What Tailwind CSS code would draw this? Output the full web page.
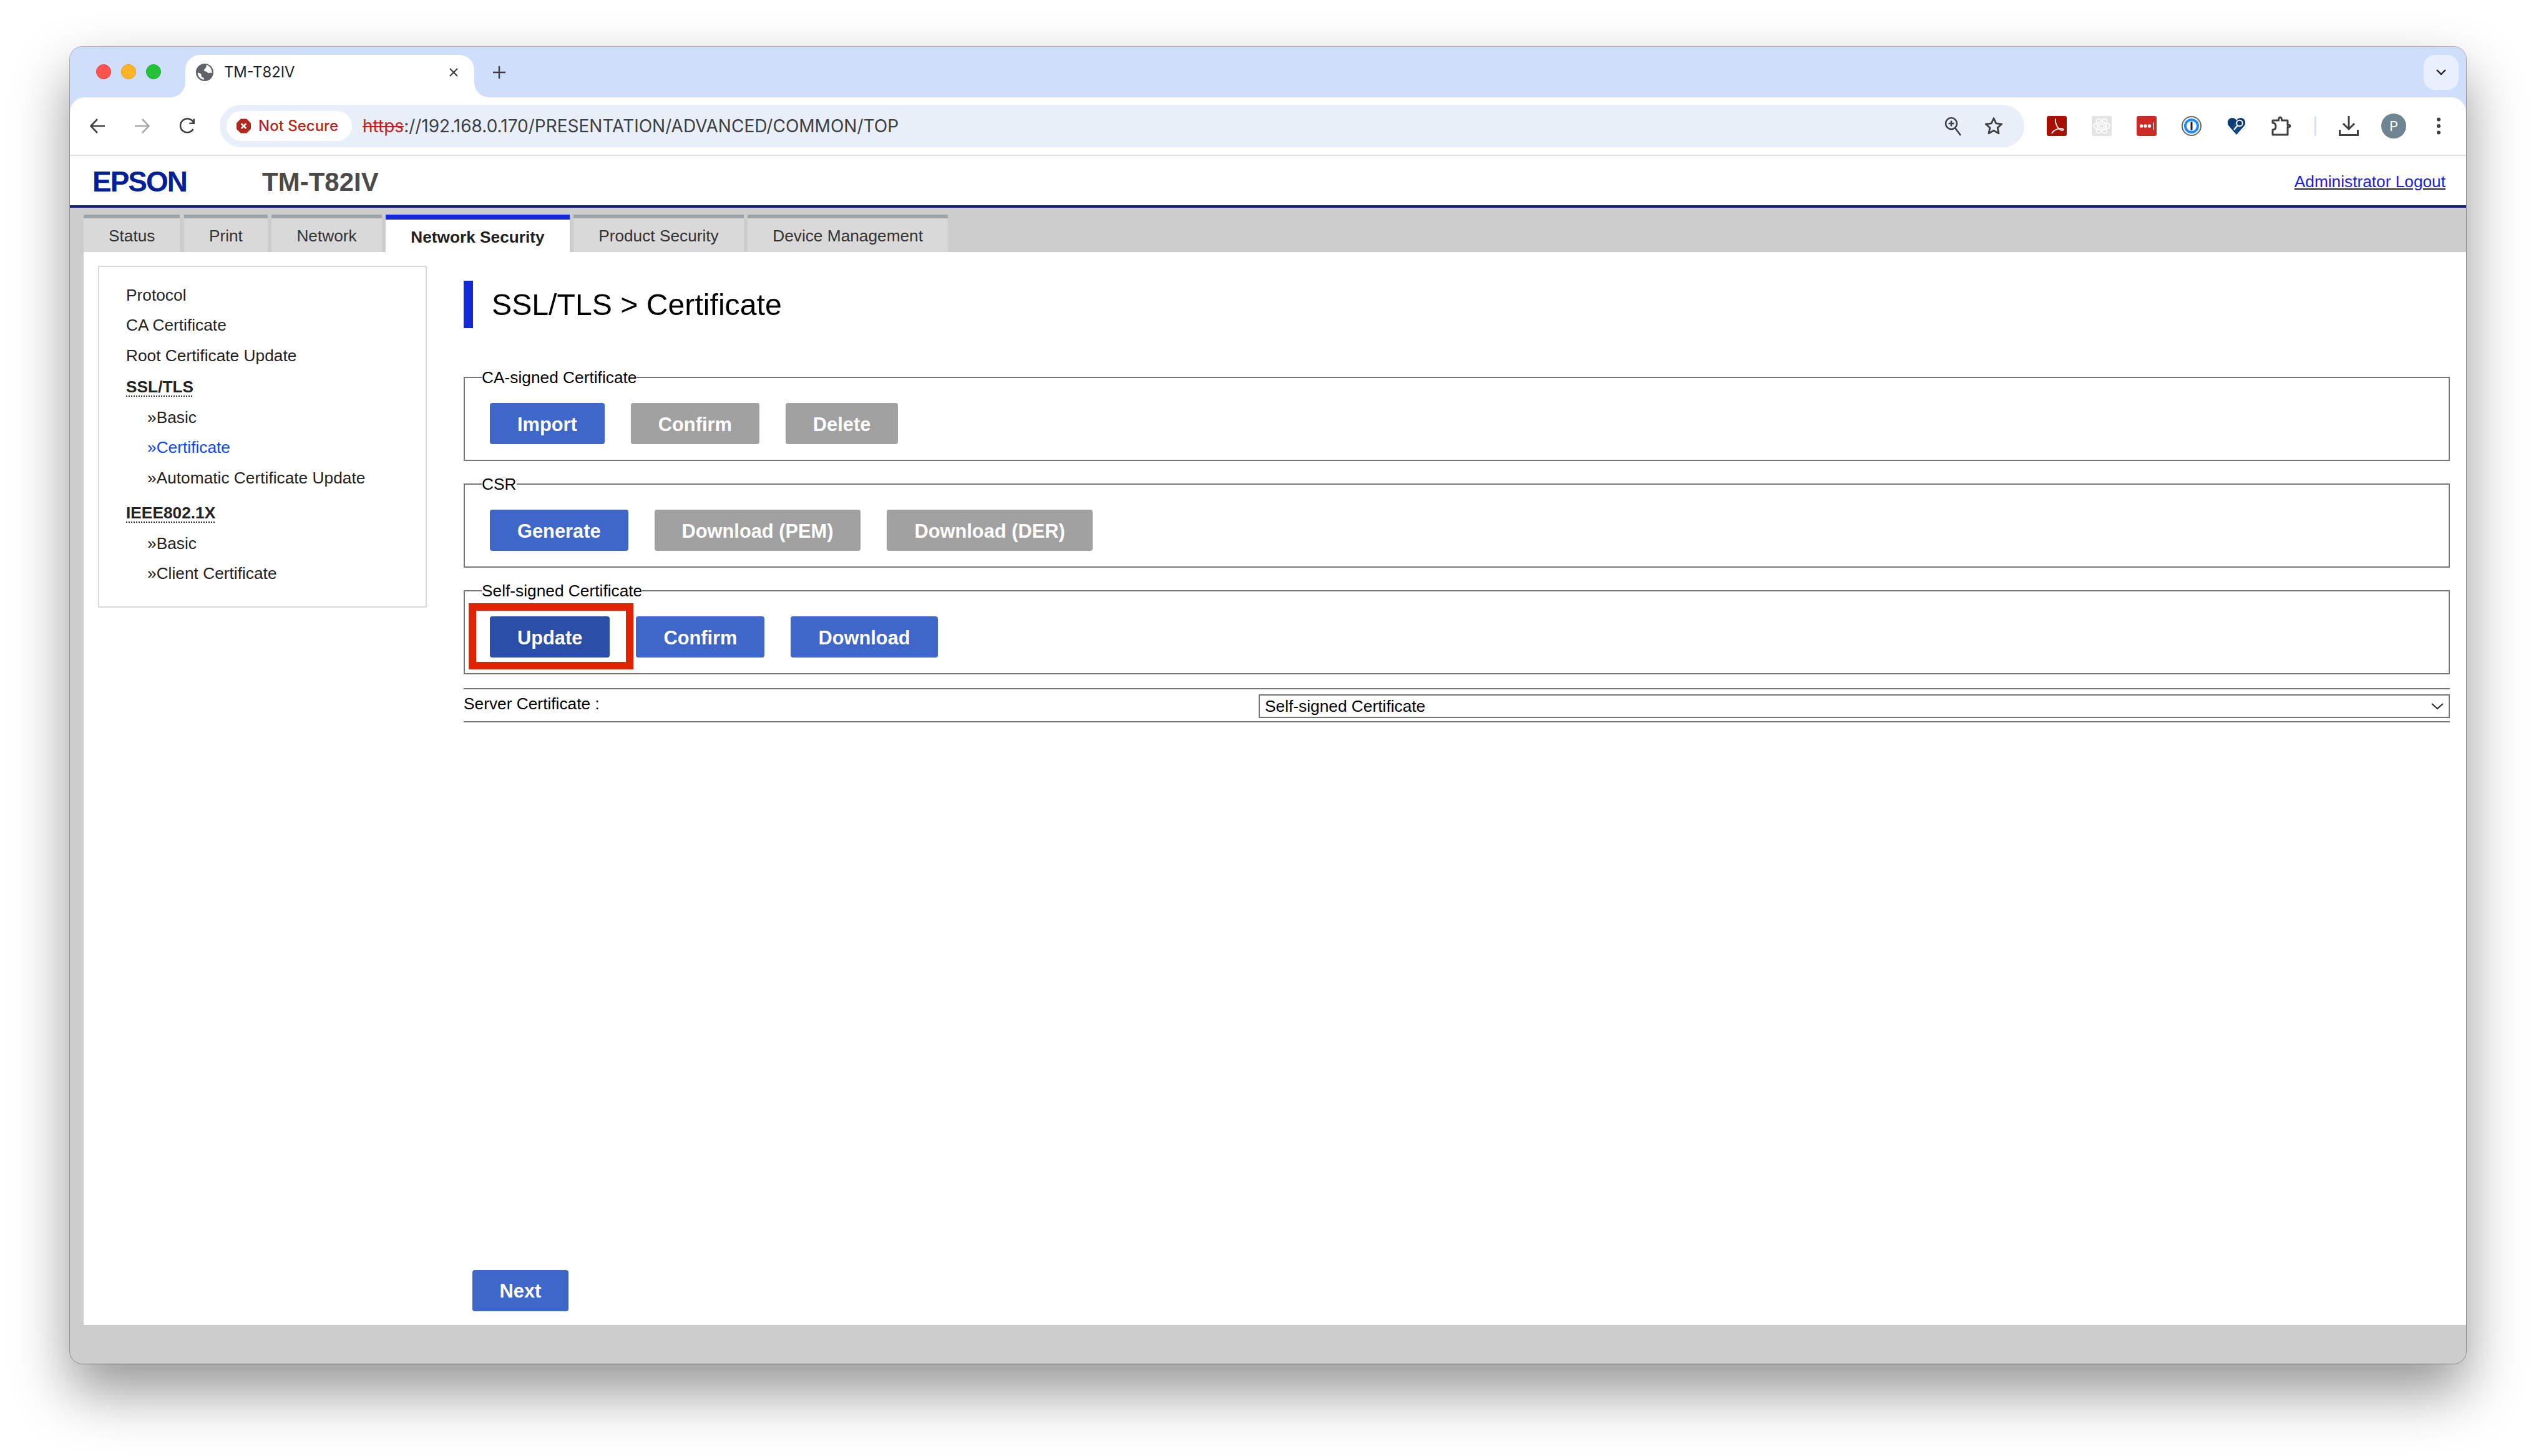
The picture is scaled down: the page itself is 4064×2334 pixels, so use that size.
<!DOCTYPE html>
<html lang="en">

<head>
    <meta charset="UTF-8">
    <meta name="viewport" content="width=device-width, initial-scale=1.0">
    <script src="https://cdn.jsdelivr.net/npm/@tailwindcss/browser@4"></script>
    <title>TM-T82IV</title>
</head>

<body class="bg-white w-[4064px] h-[2334px] overflow-hidden pt-[75px] pl-[112px] font-['Liberation_Sans',Arial,sans-serif] text-black">
    <div class="flex flex-col w-[3840px] h-[2111px] rounded-[20px] overflow-hidden bg-[#cdcdcd] shadow-[0_0_0_1px_rgba(0,0,0,0.28),0_44px_90px_rgba(0,0,0,0.42)]">

        <!-- Browser chrome -->
        <div class="bg-[#cfdffb]">
            <div class="flex items-end h-[81px]">
                <div class="flex items-center gap-4 pl-[42px] w-[185px] h-[81px] pb-[2px]">
                    <span class="w-6 h-6 rounded-full bg-[#ff5350] border border-[#e0443e]"></span>
                    <span class="w-6 h-6 rounded-full bg-[#ffb428] border border-[#e09b1e]"></span>
                    <span class="w-6 h-6 rounded-full bg-[#24c139] border border-[#1aab29]"></span>
                </div>
                <!-- Tab -->
                <div class="relative flex items-center w-[463px] h-[68px] bg-white rounded-t-[24px] pl-[17px] pb-[12px]">
                    <div class="absolute bottom-0 -left-6 w-6 h-6 bg-white">
                        <div class="w-6 h-6 bg-[#cfdffb] rounded-br-[24px]"></div>
                    </div>
                    <svg class="w-7 h-7" viewBox="0 0 24 24">
                        <circle cx="12" cy="12" r="12" fill="#5f6368" />
                        <path fill="#fff" d="M14 1.600c3 .8 5.600 3 7 5.900.9 2 1.200 4 .9 5.800-1.300-.9-2.600-1-3.900-.5-1 .4-1.700.2-2.300-.8-.6-1.100-1.700-1.500-3.100-1.600-1.200-.1-1.800-1-1.200-2.200.7-1.400 2.200-2 2.800-3.600.2-1.100 0-2.200-.2-3zM2.200 12.400c1.600.2 3 .6 4.200 1.500 1 .8 1.300 1.700 1.100 2.800-.1 1.200.6 2 1.800 2.200 1 .2 1.500.9 1.700 1.700.1.500.1 1 0 1.500-4.700-.6-8.500-4.600-8.800-9.700z" />
                    </svg>
                    <span class="ml-[17px] text-[23.800px] text-[#202124] font-['Inter',sans-serif]">TM-T82IV</span>
                    <svg class="ml-auto mr-[24px] w-[18px] h-[18px]" viewBox="0 0 18 18" fill="none" stroke="#3c4043" stroke-width="2.200">
                        <path d="M3 3l12 12M15 3L3 15" />
                    </svg>
                    <div class="absolute bottom-0 -right-6 w-6 h-6 bg-white">
                        <div class="w-6 h-6 bg-[#cfdffb] rounded-bl-[24px]"></div>
                    </div>
                </div>
                <div class="flex items-center h-[68px] pl-[30px] pb-[12px]">
                    <svg class="w-[20px] h-[20px]" viewBox="0 0 20 20" fill="none" stroke="#3c4043" stroke-width="2.400">
                        <path d="M10 0v20M0 10h20" />
                    </svg>
                </div>
                <div class="ml-auto mr-[12px] mb-[12px] flex items-center justify-center w-[56px] h-[56px] rounded-[18px] bg-[#e8effd]">
                    <svg class="w-[18px] h-[12px]" viewBox="0 0 18 12" fill="none" stroke="#202124" stroke-width="2.400">
                        <path d="M2 2l7 7 7-7" />
                    </svg>
                </div>
            </div>

            <div class="flex items-center h-[92px] bg-white rounded-t-[24px] border-b-0 pl-2 pr-2">
                <div class="flex items-center justify-center w-[72px]">
                    <svg class="w-[26px] h-[26px]" viewBox="0 0 26 26" fill="none" stroke="#3c4043" stroke-width="2.600">
                        <path d="M25 13H3M13 2L2.500 13 13 24" />
                    </svg>
                </div>
                <div class="flex items-center justify-center w-[72px]">
                    <svg class="w-[26px] h-[26px]" viewBox="0 0 26 26" fill="none" stroke="#a8a9ab" stroke-width="2.600">
                        <path d="M1 13h22M13 2l10.500 11L13 24" />
                    </svg>
                </div>
                <div class="flex items-center justify-center w-[72px]">
                    <svg class="w-[26px] h-[26px]" viewBox="0 0 26 26" fill="none" stroke="#3c4043" stroke-width="2.600">
                        <path d="M22.500 18a11 11 0 1 1 .5-10.500M23.700 1.500v7.300h-7.300" />
                    </svg>
                </div>

                <!-- Omnibox -->
                <div class="flex items-center ml-4 w-[2892px] h-[68px] rounded-full bg-[#e9eff9] pl-[11px] pr-[34px]">
                    <div class="flex items-center h-[48px] w-[201px] rounded-full bg-white pl-[16px]">
                        <svg class="w-[23px] h-[24px]" viewBox="0 0 24 24">
                            <path fill="#b3261e" d="M7 0h10l7 7v10l-7 7H7l-7-7V7z" />
                            <path d="M8 8l8 8M16 8l-8 8" stroke="#fff" stroke-width="2.800" />
                        </svg>
                        <span class="ml-[12px] text-[24px] font-medium text-[#b3261e] font-['Inter',sans-serif] whitespace-nowrap">Not Secure</span>
                    </div>
                    <span class="ml-[17px] text-[28px] text-[#3c4043] font-['Inter',sans-serif]"><span class="text-[#c5221f] line-through">https</span>://192.168.0.170/PRESENTATION/ADVANCED/COMMON/TOP</span>
                    <svg class="ml-auto w-[28px] h-[32px]" viewBox="0 0 28 32" fill="none" stroke="#3c4043" stroke-width="2.600">
                        <circle cx="11" cy="12" r="9" />
                        <path d="M17 19l9 12M11 7.500v9M6.500 12h9" />
                    </svg>
                    <svg class="ml-[36px] w-[30px] h-[30px]" viewBox="0 0 30 30" fill="none" stroke="#3c4043" stroke-width="2.800" stroke-linejoin="round">
                        <path d="M15 2.500l3.800 8.400 9 .9-6.700 6.100 1.900 9L15 22.200l-8 4.700 1.900-9-6.700-6.100 9-.9z" />
                    </svg>
                </div>

                <!-- Extensions -->
                <div class="flex items-center ml-4">
                    <div class="flex items-center justify-center w-[72px]">
                        <svg class="w-8 h-8" viewBox="0 0 32 32" fill="none">
                            <rect width="32" height="32" rx="3" fill="#a80f00" />
                            <path stroke="#fff" stroke-width="1.800" d="M15 5c-2.500 0-1 7 2 12.500 3 5 8.500 6.500 9.500 4.500 .8-2-5-2.500-11-.5-4 1.500-7 5-7.500 6.500" />
                        </svg>
                    </div>
                    <div class="flex items-center justify-center w-[72px]">
                        <svg class="w-8 h-8" viewBox="0 0 32 32" fill="none">
                            <rect width="32" height="32" rx="2" fill="#e4e4e4" />
                            <g stroke="#fff" stroke-width="1.500">
                                <ellipse cx="16" cy="16" rx="13" ry="6" />
                                <ellipse cx="16" cy="16" rx="13" ry="6" transform="rotate(60 16 16)" />
                                <ellipse cx="16" cy="16" rx="13" ry="6" transform="rotate(120 16 16)" />
                                <circle cx="16" cy="16" r="3.500" />
                            </g>
                        </svg>
                    </div>
                    <div class="flex items-center justify-center w-[72px]">
                        <svg class="w-8 h-8" viewBox="0 0 32 32">
                            <rect width="32" height="32" rx="3" fill="#cc2a25" />
                            <circle cx="7.500" cy="16" r="2.700" fill="#fff" />
                            <circle cx="14" cy="16" r="2.700" fill="#fff" />
                            <circle cx="20.500" cy="16" r="2.700" fill="#fff" />
                            <rect x="26" y="10" width="1.300" height="12" fill="#fff" />
                        </svg>
                    </div>
                    <div class="flex items-center justify-center w-[72px]">
                        <svg class="w-8 h-8" viewBox="0 0 32 32">
                            <circle cx="16" cy="16" r="15" fill="#fff" stroke="#666" stroke-width="2" />
                            <circle cx="16" cy="16" r="12" fill="#1a8cff" />
                            <circle cx="16" cy="16" r="8" fill="#fff" />
                            <rect x="14.500" y="9" width="3" height="14" rx="0.500" fill="#222" />
                        </svg>
                    </div>
                    <div class="flex items-center justify-center w-[72px]">
                        <svg class="w-[30px] h-[28px]" viewBox="0 0 30 28" fill="none">
                            <path fill="#0b3a75" d="M15 28L2 13C-1 8 2 1 8 1c3 0 5.500 1.500 7 4 1.500-2.500 4-4 7-4 6 0 9 7 6 12z" />
                            <path fill="#1c5c9e" d="M15 5L8 14l7 14 7-14z" opacity="0.500" />
                            <circle cx="20" cy="9.500" r="4.800" stroke="#fff" stroke-width="2" fill="#0b3a75" />
                            <path stroke="#fff" stroke-width="2.200" d="M16.500 13.500L11 20" />
                        </svg>
                    </div>
                    <div class="flex items-center justify-center w-[72px]">
                        <svg class="w-8 h-8" viewBox="0 0 32 32" fill="none" stroke="#3c4043" stroke-width="3" stroke-linejoin="round">
                            <path d="M2 7h9.500c0-3 1-5 2.500-5s2.500 2 2.500 5H26v7.500c2.500-.5 4 .5 4 1.500s-1.500 2.200-4 1.500V30H2v-8c3.500 0 5-2.500 5-5.500S5.500 11 2 11z" />
                        </svg>
                    </div>
                    <div class="flex items-center justify-center w-[36px]">
                        <span class="w-[3px] h-[32px] rounded-full bg-[#cfdffb]"></span>
                    </div>
                    <div class="flex items-center justify-center w-[72px]">
                        <svg class="w-8 h-8" viewBox="0 0 32 32" fill="none" stroke="#3c4043" stroke-width="3">
                            <path d="M16 0v20M7 12l9 9 9-9M1.500 22v8.500h29V22" />
                        </svg>
                    </div>
                    <div class="flex items-center justify-center w-[72px]">
                        <span class="flex items-center justify-center w-10 h-10 rounded-full bg-[#6f8591] text-[22px] text-white font-['Inter',sans-serif]">P</span>
                    </div>
                    <div class="flex items-center justify-center w-[72px]">
                        <svg class="w-[8px] h-[28px]" viewBox="0 0 8 28" fill="#3c4043">
                            <circle cx="4" cy="3.500" r="3" />
                            <circle cx="4" cy="14" r="3" />
                            <circle cx="4" cy="24.500" r="3" />
                        </svg>
                    </div>
                </div>
            </div>
        </div>

        <!-- Page header -->
        <header class="flex items-center justify-between h-[85px] bg-white border-t-2 border-t-[#e0e0e0] border-b-4 border-b-[#101f85] pl-[36px] pr-[33px]">
            <div class="flex items-center pt-[3px]">
                <span class="w-[272px] text-[46px] font-bold text-[#00209a] tracking-[-2px]">EPSON</span>
                <span class="text-[42px] font-bold text-[#4a4a4a]">TM-T82IV</span>
            </div>
            <a href="#" class="pt-[5px] text-[26.250px] text-[#1a1ee0] underline decoration-[#222]">Administrator Logout</a>
        </header>

        <!-- Tabs -->
        <nav class="flex items-end gap-[6.500px] h-[71px] pl-[22px] text-[26.250px] text-[#333]">
            <a href="#" class="flex items-center h-[60px] px-10 pt-[4px] bg-[#d9d9d9] border-t-[6px] border-t-[#9ea4aa]">Status</a>
            <a href="#" class="flex items-center h-[60px] px-10 pt-[4px] bg-[#d9d9d9] border-t-[6px] border-t-[#9ea4aa]">Print</a>
            <a href="#" class="flex items-center h-[60px] px-10 pt-[4px] bg-[#d9d9d9] border-t-[6px] border-t-[#9ea4aa]">Network</a>
            <a href="#" class="flex items-center h-[60px] px-10 pt-[6px] bg-white border-t-[8px] border-t-[#1428d8] font-bold text-[#222]">Network Security</a>
            <a href="#" class="flex items-center h-[60px] px-10 pt-[4px] bg-[#d9d9d9] border-t-[6px] border-t-[#9ea4aa]">Product Security</a>
            <a href="#" class="flex items-center h-[60px] px-10 pt-[4px] bg-[#d9d9d9] border-t-[6px] border-t-[#9ea4aa]">Device Management</a>
        </nav>

        <!-- Main -->
        <main class="flex gap-[59px] h-[1720px] ml-[22px] bg-white pt-[22px] pl-[23px] pr-[26px] pb-[22px]">
            <!-- Side menu -->
            <aside class="w-[527px] h-[548px] shrink-0 border-2 border-[#d8d8d8] pt-[21px] pl-[43px] text-[26.300px] text-[#222]">
                <ul>
                    <li class="flex items-center h-[48.500px]">Protocol</li>
                    <li class="flex items-center h-[48.500px]">CA Certificate</li>
                    <li class="flex items-center h-[48.500px]">Root Certificate Update</li>
                    <li class="flex items-center h-[48.500px] mt-[2px] font-bold"><span class="underline decoration-dotted decoration-2 underline-offset-[5px]">SSL/TLS</span></li>
                    <li class="flex items-center h-[48.500px] pl-[34px]">»Basic</li>
                    <li class="flex items-center h-[48.500px] pl-[34px] text-[#0a49f0]">»Certificate</li>
                    <li class="flex items-center h-[48.500px] pl-[34px]">»Automatic Certificate Update</li>
                    <li class="flex items-center h-[48.500px] mt-[8px] font-bold"><span class="underline decoration-dotted decoration-2 underline-offset-[5px]">IEEE802.1X</span></li>
                    <li class="flex items-center h-[48.500px] pl-[34px]">»Basic</li>
                    <li class="flex items-center h-[48.500px] pl-[34px]">»Client Certificate</li>
                </ul>
            </aside>

            <!-- Content -->
            <section class="flex flex-col flex-1">
                <h1 class="flex items-center h-[76px] mt-6 border-l-[15px] border-l-[#1428d8] pl-[30px] text-[48.200px] font-normal">SSL/TLS &gt; Certificate</h1>

                <fieldset class="mt-[64px] border-2 border-[#767676] px-10 pt-[26px] pb-[25px]">
                    <legend class="-ml-[13px] text-[26.300px] leading-[30px]">CA-signed Certificate</legend>
                    <div class="flex gap-[42px] text-[30.800px] leading-[66px] font-bold text-white">
                        <button class="h-[66px] px-11 pt-[2px] rounded bg-[#3f66c9]">Import</button>
                        <button class="h-[66px] px-11 pt-[2px] rounded bg-[#a1a1a1]">Confirm</button>
                        <button class="h-[66px] px-11 pt-[2px] rounded bg-[#a1a1a1]">Delete</button>
                    </div>
                </fieldset>

                <fieldset class="mt-[22px] border-2 border-[#767676] px-10 pt-[26px] pb-[25px]">
                    <legend class="-ml-[13px] text-[26.300px] leading-[30px]">CSR</legend>
                    <div class="flex gap-[42px] text-[30.800px] leading-[66px] font-bold text-white">
                        <button class="h-[66px] px-11 pt-[2px] rounded bg-[#3f66c9]">Generate</button>
                        <button class="h-[66px] px-11 pt-[2px] rounded bg-[#a1a1a1]">Download (PEM)</button>
                        <button class="h-[66px] px-11 pt-[2px] rounded bg-[#a1a1a1]">Download (DER)</button>
                    </div>
                </fieldset>

                <fieldset class="mt-[22px] border-2 border-[#767676] px-10 pt-[26px] pb-[25px]">
                    <legend class="-ml-[13px] text-[26.300px] leading-[30px]">Self-signed Certificate</legend>
                    <div class="flex gap-[42px] text-[30.800px] leading-[66px] font-bold text-white">
                        <div class="relative flex">
                            <button class="h-[66px] px-11 pt-[2px] rounded bg-[#2b4ea8]">Update</button>
                            <div class="absolute -left-[34px] -top-[21px] w-[264px] h-[106px] border-[12px] border-[#e02300]"></div>
                        </div>
                        <button class="h-[66px] px-11 pt-[2px] rounded bg-[#3f66c9]">Confirm</button>
                        <button class="h-[66px] px-11 pt-[2px] rounded bg-[#3f66c9]">Download</button>
                    </div>
                </fieldset>

                <div class="flex items-center h-[55px] mt-[22px] border-y-2 border-[#767676] text-[26.300px]">
                    <label for="server-cert" class="w-[1274px] pb-[4px]">Server Certificate :</label>
                    <div class="relative flex-1 h-[38px] mt-[2px]">
                        <select id="server-cert" class="w-full h-full appearance-none bg-white border-2 border-[#767676] pl-2 text-[26.300px] leading-[30px]">
                            <option>Self-signed Certificate</option>
                        </select>
                        <svg class="absolute right-[10px] top-[13px] w-[20px] h-[12px]" viewBox="0 0 20 12" fill="none" stroke="#222" stroke-width="2">
                            <path d="M1 2l9 8 9-8" />
                        </svg>
                    </div>
                </div>

                <button class="mt-auto ml-[14px] w-[154px] h-[66px] pt-[2px] rounded bg-[#3f66c9] text-[30.800px] font-bold text-white">Next</button>
            </section>
        </main>
    </div>
</body>

</html>
